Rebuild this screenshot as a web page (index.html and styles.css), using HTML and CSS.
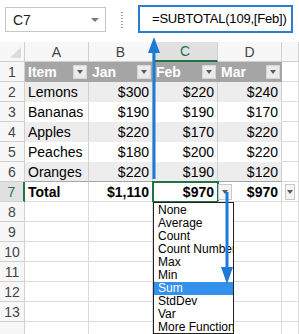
FILE: index.html
```html
<!DOCTYPE html>
<html lang="en">
<head>
    <meta charset="UTF-8">
    <title>Subtotal total row</title>
    <link rel="stylesheet" href="styles.css">
</head>
<body>

    <div class="bar">
        <div class="namebox"><span>C7</span><span class="caret"></span></div>
        <div class="dots"></div>
        <div class="formula">=SUBTOTAL(109,[Feb])</div>
    </div>

    <div class="sheet">
        <div class="c corner"><span class="tri"></span></div>
        <div class="c ch">A</div>
        <div class="c ch">B</div>
        <div class="c ch sel">C</div>
        <div class="c ch">D</div>
        <div class="c ch"></div>

        <div class="c rh">1</div>
        <div class="c hd">Item<span class="btn"><i></i></span></div>
        <div class="c hd">Jan<span class="btn"><i></i></span></div>
        <div class="c hd">Feb<span class="btn"><i></i></span></div>
        <div class="c hd">Mar<span class="btn"><i></i></span></div>
        <div class="c"></div>

        <div class="c rh">2</div>
        <div class="c band">Lemons</div>
        <div class="c band r">$300</div>
        <div class="c band r">$220</div>
        <div class="c band r">$240</div>
        <div class="c"></div>

        <div class="c rh">3</div>
        <div class="c plain">Bananas</div>
        <div class="c plain r">$190</div>
        <div class="c plain r">$190</div>
        <div class="c plain r">$170</div>
        <div class="c"></div>

        <div class="c rh">4</div>
        <div class="c band">Apples</div>
        <div class="c band r">$220</div>
        <div class="c band r">$170</div>
        <div class="c band r">$220</div>
        <div class="c"></div>

        <div class="c rh">5</div>
        <div class="c plain">Peaches</div>
        <div class="c plain r">$180</div>
        <div class="c plain r">$200</div>
        <div class="c plain r">$220</div>
        <div class="c"></div>

        <div class="c rh">6</div>
        <div class="c band last">Oranges</div>
        <div class="c band last r">$220</div>
        <div class="c band last r">$190</div>
        <div class="c band last r">$120</div>
        <div class="c"></div>

        <div class="c rh sel">7</div>
        <div class="c total">Total</div>
        <div class="c total r">$1,110</div>
        <div class="c total r active">$970</div>
        <div class="c total r split"><span class="btn light"><i></i></span>$970</div>
        <div class="c"><span class="btn light"><i></i></span></div>

        <div class="c rh">8</div><div class="c"></div><div class="c"></div><div class="c"></div><div class="c"></div><div class="c"></div>
        <div class="c rh">9</div><div class="c"></div><div class="c"></div><div class="c"></div><div class="c"></div><div class="c"></div>
        <div class="c rh">10</div><div class="c"></div><div class="c"></div><div class="c"></div><div class="c"></div><div class="c"></div>
        <div class="c rh">11</div><div class="c"></div><div class="c"></div><div class="c"></div><div class="c"></div><div class="c"></div>
        <div class="c rh">12</div><div class="c"></div><div class="c"></div><div class="c"></div><div class="c"></div><div class="c"></div>
        <div class="c rh">13</div><div class="c"></div><div class="c"></div><div class="c"></div><div class="c"></div><div class="c"></div>
        <div class="c rh"></div><div class="c"></div><div class="c"></div><div class="c"></div><div class="c"></div><div class="c"></div>
    </div>

    <!-- dropdown opened from the C7 button -->
    <ul class="list">
        <li>None</li>
        <li>Average</li>
        <li>Count</li>
        <li>Count Numbers</li>
        <li>Max</li>
        <li>Min</li>
        <li class="on">Sum</li>
        <li>StdDev</li>
        <li>Var</li>
        <li>More Functions...</li>
    </ul>

    <svg class="arrows" width="299" height="334" viewBox="0 0 299 334">
        <line x1="154" y1="50" x2="154" y2="179" stroke="#1f7ad6" stroke-width="3"/>
        <polygon points="154,37 148,53 160,53" fill="#1f7ad6"/>
        <line x1="227" y1="192" x2="227" y2="270" stroke="#1f7ad6" stroke-width="3"/>
        <polygon points="221,267 233,267 227,284" fill="#1f7ad6"/>
    </svg>

</body>
</html>
```

FILE: styles.css
```css
body {
    margin: 0;
    width: 299px;
    height: 334px;
    overflow: hidden;
    position: relative;
    background-color: white;
    font-family: "Liberation Sans", Arial, sans-serif;
    color: #000;
}
.bar {
    display: flex;
    align-items: flex-start;
    height: 42px;
}
.namebox {
    margin: 7px 0 0 5px;
    width: 101px;
    height: 25px;
    box-sizing: border-box;
    border: 1px solid #c6c6c6;
    display: flex;
    align-items: center;
    justify-content: space-between;
    padding: 0 6px 0 7px;
    font-size: 14px;
    color: #222;
}
.caret {
    border-left: 4px solid transparent;
    border-right: 4px solid transparent;
    border-top: 4px solid #7a7a7a;
}
.dots {
    margin: 12px 0 0 15px;
    width: 2px;
    height: 16px;
    background: repeating-linear-gradient(#a0a0a0 0 1px, transparent 1px 3px);
}
.formula {
    margin: 5px 0 0 15px;
    width: 155px;
    height: 28px;
    box-sizing: border-box;
    border: 2px solid #2b7cd3;
    padding-left: 12px;
    font-size: 13px;
    letter-spacing: -0.2px;
    line-height: 24px;
    white-space: nowrap;
}
.sheet {
    display: grid;
    grid-template-columns: 25px 64px 64px 65px 64px 17px;
    grid-auto-rows: 20px;
    font-size: 14px;
}
.c {
    box-sizing: border-box;
    border-right: 1px solid #dadada;
    border-bottom: 1px solid #dadada;
    padding: 0 3px;
    display: flex;
    align-items: center;
    white-space: nowrap;
    overflow: hidden;
}
.r {
    justify-content: flex-end;
}
.ch, .rh {
    background-color: #f7f7f7;
    border-color: #d0d0d0;
    color: #444;
    justify-content: center;
    padding: 0;
}
.ch.sel {
    background-color: #e1e1e1;
    color: #217346;
    border-bottom: 2px solid #217346;
}
.rh.sel {
    background-color: #e1e1e1;
    color: #217346;
    border-right: 2px solid #217346;
}
.corner {
    background-color: #f7f7f7;
    border-color: #d0d0d0;
    align-items: flex-end;
    justify-content: flex-end;
    padding: 0 3px 3px 0;
}
.tri {
    width: 0;
    height: 0;
    border-left: 11px solid transparent;
    border-bottom: 11px solid #dcdcdc;
}
.hd {
    background-color: #a5a5a5;
    border-color: #a5a5a5;
    color: white;
    font-weight: bold;
    padding: 0 1px 0 3px;
}
.btn {
    margin-left: auto;
    width: 14px;
    height: 14px;
    box-sizing: border-box;
    background-color: #ebebeb;
    border: 1px solid #d6d6d6;
    display: flex;
    align-items: center;
    justify-content: center;
}
.btn i {
    border-left: 3.5px solid transparent;
    border-right: 3.5px solid transparent;
    border-top: 4px solid #5a5a5a;
}
.btn.light {
    margin-left: 0;
    height: 16px;
    background-color: #f4f4f4;
    border-color: #c9c9c9;
}
.band {
    background-color: #ededed;
    border-right-color: #cfcfcf;
    border-bottom-color: #ededed;
}
.plain {
    border-right-color: #cfcfcf;
    border-bottom-color: white;
}
.last {
    border-bottom-color: #a5a5a5;
}
.total {
    font-weight: bold;
    border-right-color: #d6d6d6;
}
.active {
    outline: 2px solid #217346;
    outline-offset: -1px;
}
.split {
    justify-content: space-between;
    padding-left: 0;
}
.list {
    position: absolute;
    left: 153px;
    top: 202px;
    width: 81px;
    height: 132px;
    box-sizing: border-box;
    margin: 0;
    padding: 1px 0 0;
    list-style: none;
    background-color: white;
    border: 1px solid #222;
    font-size: 12px;
}
.list li {
    height: 13px;
    line-height: 13px;
    padding-left: 4px;
    white-space: nowrap;
    overflow: hidden;
}
.list li.on {
    background-color: #3391ec;
    color: white;
}
.arrows {
    position: absolute;
    left: 0;
    top: 0;
    pointer-events: none;
}
```
